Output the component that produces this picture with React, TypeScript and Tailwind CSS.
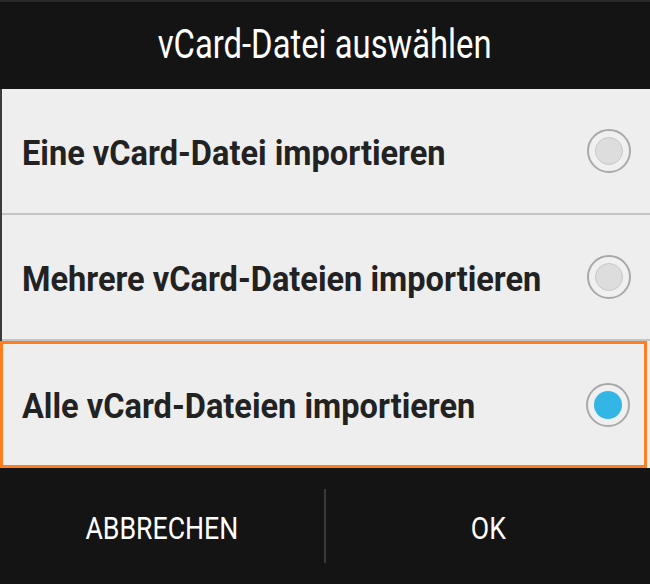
import React, { useState } from "react";

const options = [
  "Eine vCard-Datei importieren",
  "Mehrere vCard-Dateien importieren",
  "Alle vCard-Dateien importieren",
];

const Radio = ({ checked }: { checked: boolean }) => (
  <div className="flex h-[44px] w-[44px] items-center justify-center rounded-full border-[2px] border-[#a9a9a9] bg-[#f0f0f0]">
    <div
      className={`h-[28px] w-[28px] rounded-full ${
        checked ? "bg-[#33b5e5]" : "border border-[#c8c8c8] bg-[#dddddd]"
      }`}
    />
  </div>
);

export default function App() {
  const [selected, setSelected] = useState(2);

  return (
    <div className="flex h-[584px] w-[650px] flex-col overflow-hidden bg-[#141414] font-['Roboto',sans-serif]">
      <div className="flex h-[89px] items-center justify-center border-t-[2px] border-[#2a2a2a] bg-[#141414] pb-[2px]">
        <span className="inline-block origin-center scale-x-[0.82] text-[40px] leading-none text-white">
          vCard-Datei auswählen
        </span>
      </div>

      <div className="flex flex-col border-l-[2px] border-[#3b3b3b] bg-[#eeeeee]">
        {options.map((label, i) => {
          const active = i === selected;
          return (
            <div
              key={label}
              onClick={() => setSelected(i)}
              className={`flex cursor-pointer items-center justify-between ${
                active
                  ? "ml-[-2px] mr-[3px] h-[127px] border-[3px] border-[#ff7d1e] pl-[19px] pr-[14px]"
                  : "h-[126px] border-b-[2px] border-[#c4c4c4] pl-[20px] pr-[19px]"
              } ${i === 1 ? "border-b-0 h-[125px]" : ""}`}
            >
              <span className="inline-block origin-left scale-x-[0.93] pt-[4px] text-[35px] font-bold leading-none text-[#222222]">
                {label}
              </span>
              <Radio checked={active} />
            </div>
          );
        })}
      </div>

      <div className="flex flex-1 items-center bg-[#141414]">
        <button className="flex h-full flex-1 items-center justify-center pt-[4px]">
          <span className="inline-block scale-x-[0.86] text-[31px] leading-none text-white">
            ABBRECHEN
          </span>
        </button>
        <div className="h-[74px] w-[2px] bg-[#3a3a3a]" />
        <button className="flex h-full flex-1 items-center justify-center pt-[4px]">
          <span className="inline-block scale-x-[0.86] text-[31px] leading-none text-white">
            OK
          </span>
        </button>
      </div>
    </div>
  );
}
